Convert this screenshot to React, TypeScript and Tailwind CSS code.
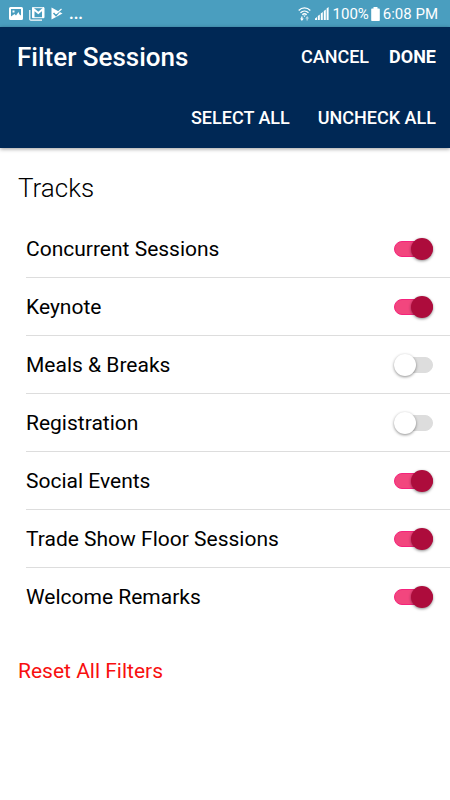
import React from "react";

const initialTracks = [
  { id: "concurrent", name: "Concurrent Sessions", on: true },
  { id: "keynote", name: "Keynote", on: true },
  { id: "meals", name: "Meals & Breaks", on: false },
  { id: "registration", name: "Registration", on: false },
  { id: "social", name: "Social Events", on: true },
  { id: "trade", name: "Trade Show Floor Sessions", on: true },
  { id: "welcome", name: "Welcome Remarks", on: true },
];

function StatusBar() {
  return (
    <div className="flex h-[27px] items-center justify-between bg-[#4a9ebf] pl-[9px] pr-3 text-white">
      <div className="flex items-center gap-[6px]">
        {/* Screenshot saved */}
        <svg width="14" height="13" viewBox="0 0 14 13" aria-hidden="true">
          <rect x="1" y="1" width="12" height="11" rx="0.5" fill="none" stroke="currentColor" strokeWidth="2" />
          <path fill="currentColor" d="M2 9.500 5.500 7l1.500 1.500L9.500 5l1 2.500 1.500 1V11H2zM3.500 3.500h2v2h-2z" />
        </svg>
        {/* Mail */}
        <svg width="16" height="14" viewBox="0 0 16 14" aria-hidden="true">
          <path fill="none" stroke="currentColor" strokeWidth="1.200" d="M.8 3v9.200a1 1 0 0 0 1 1H13" />
          <path fill="none" stroke="currentColor" strokeWidth="1" d="M3.500.700h11.500v10H3.500z" />
          <path fill="none" stroke="currentColor" strokeWidth="2" d="M4.500 11V2l4.800 4L14 2v9" />
        </svg>
        {/* Play */}
        <svg width="12" height="13" viewBox="0 0 12 13" aria-hidden="true">
          <path fill="currentColor" d="M.5.500 11.500 6.500 .5 12.500z" />
          <path fill="none" stroke="#4a9ebf" strokeWidth="1.600" d="M2.500 6l2.500 2.500 5-6" />
          <path fill="none" stroke="currentColor" strokeWidth="1.200" d="M4.500 5.500l1 1 5-4.500" />
        </svg>
        <span className="text-base font-bold leading-5">...</span>
      </div>
      <div className="flex items-center text-[15px] leading-5">
        {/* Wi-Fi */}
        <svg className="mr-1" width="13" height="14" viewBox="0 0 13 14" aria-hidden="true">
          <g fill="none" stroke="currentColor" strokeWidth="1.300">
            <path d="M.7 3.500C4 .1 9 .1 12.300 3.500" />
            <path d="M2.500 5.800c2.300-2.300 5.700-2.300 8 0" />
            <path d="M4.300 7.800c1.300-1.200 3.100-1.200 4.400 0" />
          </g>
          <path fill="currentColor" d="M5.200 8.500h2.600L6.500 10zM3.200 9.500h1.300v2h1.300L3.900 14 2 11.500h1.200z" />
          <path fill="currentColor" opacity=".6" d="M8.500 13.500v-2H7.300L9.200 9l1.900 2.500H9.800v2z" />
        </svg>
        {/* Signal */}
        <svg className="mr-1" width="14" height="13" viewBox="0 0 14 13" aria-hidden="true">
          <path fill="currentColor" d="M0 13v-1.500L2 10v3zM2.800 13V9l2-1.500V13zM5.800 13V6.500l2-1.500v8zM8.800 13V4l2-1.500V13zM11.600 13V1.500L13.600 0v13z" />
        </svg>
        <span>100%</span>
        <svg className="ml-0.5 mr-[3px]" width="9" height="14" viewBox="0 0 9 14" aria-hidden="true">
          <path fill="currentColor" d="M2.500 0h4v1.500H8a.8.8 0 0 1 .8.800v11a.7.7 0 0 1-.7.700H.9a.7.7 0 0 1-.7-.7v-11a.8.8 0 0 1 .8-.8h1.500z" />
        </svg>
        <span>6:08 PM</span>
      </div>
    </div>
  );
}

type ToggleRowProps = {
  id: string;
  name: string;
  on: boolean;
  last: boolean;
  onChange: () => void;
};

function ToggleRow({ id, name, on, last, onChange }: ToggleRowProps) {
  return (
    <li className={`flex h-[58px] items-center justify-between pr-[17px] ${last ? "" : "border-b border-[#dddddd]"}`}>
      <label htmlFor={id} className="flex-1 cursor-pointer text-[21px] leading-7">
        {name}
      </label>
      <span className="relative flex h-6 w-[39px] items-center">
        <input
          id={id}
          type="checkbox"
          role="switch"
          checked={on}
          onChange={onChange}
          className="peer h-4 w-full cursor-pointer appearance-none rounded-full border border-[#dddddd] bg-[#dddddd] checked:border-[#f5237c] checked:bg-[#f2467e]"
        />
        <span className="pointer-events-none absolute left-0 size-[22px] rounded-full bg-white shadow-[0_1px_3px_rgba(0,0,0,0.45)] peer-checked:left-auto peer-checked:right-0 peer-checked:bg-[#ad0c3c]" />
      </span>
    </li>
  );
}

export default function App() {
  const [tracks, setTracks] = React.useState(initialTracks);

  const toggle = (id: string) =>
    setTracks((prev) => prev.map((t) => (t.id === id ? { ...t, on: !t.on } : t)));
  const setAll = (on: boolean) => setTracks((prev) => prev.map((t) => ({ ...t, on })));

  return (
    <div className="min-h-screen bg-white font-['Roboto',sans-serif] text-black">
      <StatusBar />

      <header className="bg-[#002855] pl-[17px] pr-[14px] text-white shadow-[0_1px_4px_rgba(0,0,0,0.4)]">
        <div className="flex h-[60px] items-center justify-between">
          <h1 className="text-[26px] font-medium leading-8">Filter Sessions</h1>
          <div className="flex items-center gap-5 text-[18px] leading-6">
            <button type="button" className="cursor-pointer font-medium">CANCEL</button>
            <button type="button" className="cursor-pointer font-bold">DONE</button>
          </div>
        </div>
        <div className="flex h-[61px] items-center justify-end gap-7 text-[18px] font-medium leading-6">
          <button type="button" className="cursor-pointer" onClick={() => setAll(true)}>SELECT ALL</button>
          <button type="button" className="cursor-pointer" onClick={() => setAll(false)}>UNCHECK ALL</button>
        </div>
      </header>

      <main>
        <h2 className="px-[18px] pb-[18px] pt-[26px] text-[26px] font-light leading-7">Tracks</h2>
        <ul className="pl-[26px]">
          {tracks.map((track, i) => (
            <ToggleRow
              key={track.id}
              id={track.id}
              name={track.name}
              on={track.on}
              last={i === tracks.length - 1}
              onChange={() => toggle(track.id)}
            />
          ))}
        </ul>
        <button
          type="button"
          className="mx-[18px] mt-[31px] cursor-pointer text-[21px] leading-7 text-[#f80f0f]"
          onClick={() => setTracks(initialTracks)}
        >
          Reset All Filters
        </button>
      </main>
    </div>
  );
}
